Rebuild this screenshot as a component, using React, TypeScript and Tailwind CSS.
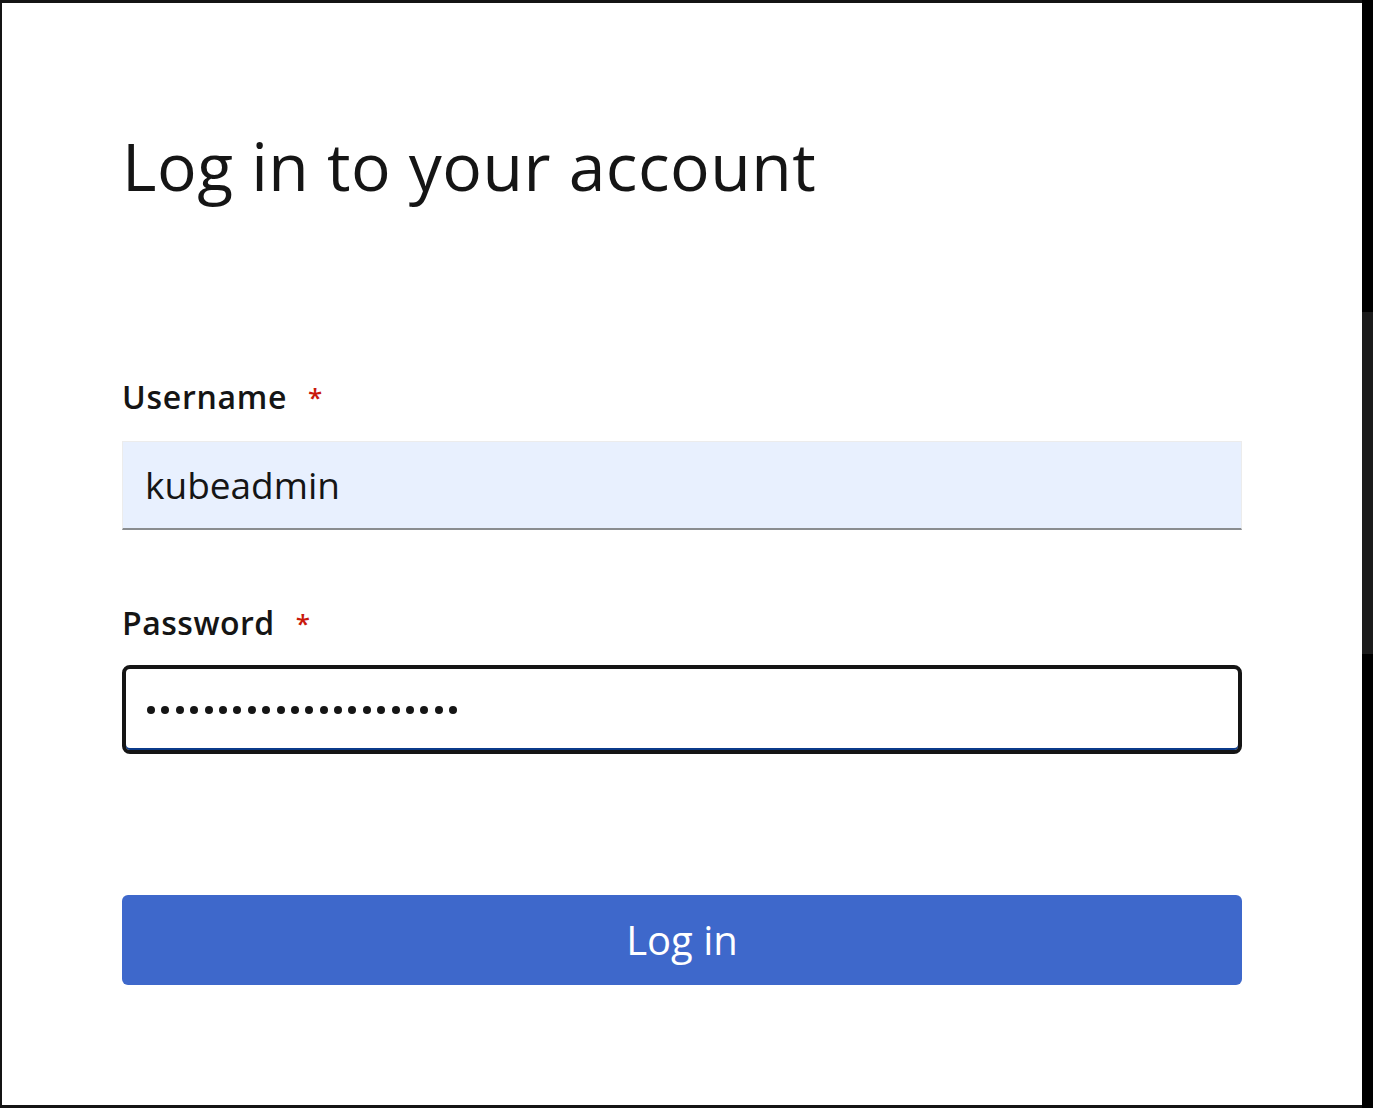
export default function App() {
  const font = { fontFamily: '"Open Sans", "Liberation Sans", sans-serif' };
  return (
    <div className="flex h-[1108px] w-[1373px] bg-black" style={font}>
      <div className="flex-1 border-t-[3px] border-b-[3px] border-l-2 border-[#141414] bg-white">
        <div className="w-[1120px] ml-[120px] pt-[118px]">
          <h1 className="text-[66px] leading-[88px] font-normal text-[#151515] tracking-[0.5px]">
            Log in to your account
          </h1>

          <form className="mt-[168px]" onSubmit={(e) => e.preventDefault()}>
            <label className="flex items-center text-[32px] font-semibold text-[#151515] leading-[40px] tracking-[0.7px]">
              Username
              <span className="ml-[21px] text-[#c9190b] text-[26px]">*</span>
            </label>
            <div className="mt-[24px] h-[89px] bg-[#e8f0fe] border-t border-x border-[#ececec] border-b-2 border-b-[#8a8d90] flex items-center px-[22px]">
              <span className="text-[37px] text-[#151515]">kubeadmin</span>
            </div>

            <label className="mt-[73px] flex items-center text-[32px] font-semibold text-[#151515] leading-[40px] tracking-[0.5px]">
              Password
              <span className="ml-[21px] text-[#c9190b] text-[26px]">*</span>
            </label>
            <div className="mt-[22px] h-[89px] rounded-[8px] border-[4px] border-[#151515] flex items-center px-[21px] shadow-[inset_0_-2px_0_#0b3a8a]">
              <span className="flex gap-[6.4px]">
                {Array.from({ length: 22 }).map((_, i) => (
                  <span key={i} className="block w-[8px] h-[8px] rounded-full bg-[#151515]" />
                ))}
              </span>
            </div>

            <button
              type="submit"
              className="mt-[141px] w-full h-[90px] rounded-[6px] bg-[#3e68cb] text-white text-[40px] leading-none"
            >
              Log in
            </button>
          </form>
        </div>
      </div>
      <div className="w-[11px] flex flex-col">
        <div className="h-[312px] bg-black" />
        <div className="h-[342px] bg-[#1b1b1b]" />
        <div className="flex-1 bg-black" />
      </div>
    </div>
  );
}
